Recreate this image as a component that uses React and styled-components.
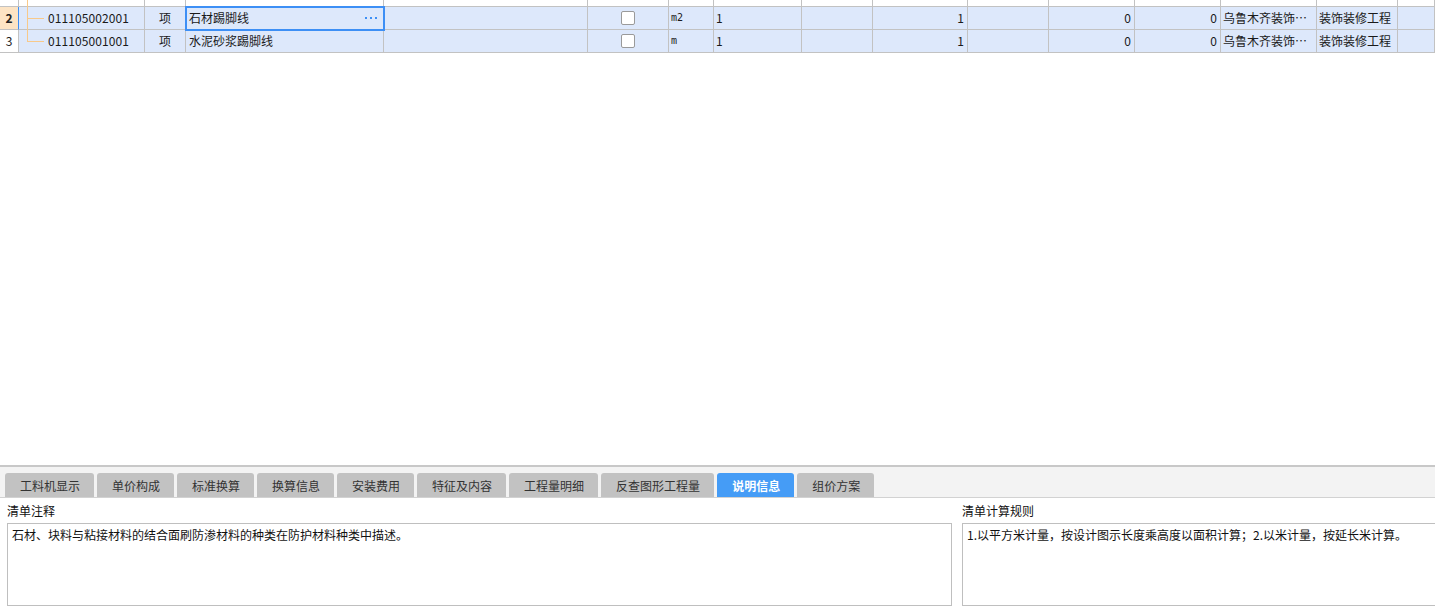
import React from "react";
import styled, { createGlobalStyle, css } from "styled-components";

const GlobalStyle = createGlobalStyle`
  html, body {
    margin: 0;
    padding: 0;
    background: #ffffff;
    overflow: hidden;
  }
  body {
    font-family: "Noto Sans CJK SC", "Noto Sans", sans-serif;
    font-size: 12px;
    color: #1a1a1a;
  }
`;

const COLS = "19px 126px 41px 198px 204px 81px 45px 88px 71px 95px 81px 86px 86px 96px 81px 1fr";

const Page = styled.div`
  width: 1435px;
  height: 606px;
  display: flex;
  flex-direction: column;
  overflow: hidden;
`;

const GridArea = styled.div`
  height: 465px;
  flex: none;
  background: #ffffff;
`;

const Row = styled.div`
  display: grid;
  grid-template-columns: ${COLS};
  height: ${(p) => p.$height || 23}px;
  background: ${(p) => (p.$filled ? "#dde8fb" : "#ffffff")};
`;

const Cell = styled.div`
  position: relative;
  box-sizing: border-box;
  border-right: 1px solid #c2c2c2;
  border-bottom: 1px solid #c2c2c2;
  display: flex;
  align-items: center;
  justify-content: ${(p) =>
    p.$align === "right" ? "flex-end" : p.$align === "center" ? "center" : "flex-start"};
  padding: 0 ${(p) => (p.$align === "right" ? 3 : 0)}px 0 ${(p) => p.$pl ?? 2}px;
  white-space: nowrap;
  overflow: hidden;
  line-height: 22px;
  font-size: 12px;
`;

const HeaderCell = styled(Cell)`
  justify-content: center;
  padding: 0;
  background: ${(p) => (p.$active ? "#fde4c4" : "#ffffff")};
  font-weight: ${(p) => (p.$active ? 700 : 400)};
  border-right-color: ${(p) => (p.$active ? "#3d8ff5" : "#c2c2c2")};
  color: #222;
`;

const CodeCell = styled(Cell)`
  padding-left: 8px;
  align-items: stretch;
  overflow: visible;
`;

const CodeText = styled.span`
  align-self: center;
  margin-left: 4px;
  letter-spacing: 0.1px;
`;

const TreeGuide = styled.span`
  position: relative;
  width: 17px;
  flex: none;

  &::before {
    content: "";
    position: absolute;
    left: 0;
    top: 0;
    width: 1px;
    bottom: ${(p) => (p.$variant === "last" ? "50%" : "-1px")};
    background: #f8c98a;
  }

  ${(p) =>
    p.$variant !== "through" &&
    css`
      &::after {
        content: "";
        position: absolute;
        left: 0;
        right: 0;
        top: 50%;
        height: 1px;
        background: #f8c98a;
      }
    `}
`;

const NameCell = styled(Cell)`
  padding-left: 3px;
  justify-content: space-between;
  overflow: visible;
  ${(p) =>
    p.$selected &&
    css`
      z-index: 2;
      outline: 2px solid #3d8ff5;
      outline-offset: -1px;
    `}
`;

const More = styled.svg`
  margin-right: 6px;
  flex: none;
`;

const Check = styled.span`
  display: block;
  width: 12px;
  height: 12px;
  border: 1px solid #9a9a9a;
  border-radius: 2px;
  background: #ffffff;
`;

const Unit = styled.span`
  font-family: "DejaVu Sans Mono", "Liberation Mono", monospace;
  font-size: 10px;
`;

const TabBar = styled.div`
  flex: none;
  display: flex;
  align-items: flex-end;
  gap: 3px;
  height: 33px;
  box-sizing: border-box;
  padding-left: 5px;
  background: #f3f3f3;
  border-top: 2px solid #c8c8c8;
  border-bottom: 1px solid #d2d2d2;
`;

const Tab = styled.div`
  height: 24px;
  padding: 0 14px 0 15px;
  display: flex;
  align-items: center;
  border-radius: 3px 3px 0 0;
  font-family: "Noto Sans CJK SC", sans-serif;
  font-size: 12px;
  background: ${(p) => (p.$active ? "#459cf6" : "#c2c2c2")};
  color: ${(p) => (p.$active ? "#ffffff" : "#333333")};
  font-weight: ${(p) => (p.$active ? 700 : 400)};
`;

const Panels = styled.div`
  flex: 1;
  display: grid;
  grid-template-columns: 945px 1fr;
  column-gap: 10px;
  padding-left: 7px;
  background: #ffffff;
`;

const Panel = styled.div`
  display: flex;
  flex-direction: column;
  min-width: 0;
`;

const PanelLabel = styled.div`
  height: 25px;
  line-height: 25px;
  font-size: 12px;
  color: #111;
`;

const TextBox = styled.div`
  flex: 1;
  box-sizing: border-box;
  border: 1px solid #bfbfbf;
  border-right: ${(p) => (p.$open ? "none" : "1px solid #bfbfbf")};
  padding: 4px 4px;
  font-size: 12px;
  line-height: 14px;
  color: #111;
  white-space: nowrap;
`;

const tabs = [
  "工料机显示",
  "单价构成",
  "标准换算",
  "换算信息",
  "安装费用",
  "特征及内容",
  "工程量明细",
  "反查图形工程量",
  "说明信息",
  "组价方案",
];

const rows = [
  { no: "2", code: "011105002001", name: "石材踢脚线", unit: "m2", active: true, guide: "mid" },
  { no: "3", code: "011105001001", name: "水泥砂浆踢脚线", unit: "m", active: false, guide: "last" },
];

const EmptyCells = ({ count }) =>
  Array.from({ length: count }).map((_, i) => <Cell key={i} />);

const Ellipsis = () => (
  <More width="12" height="2" viewBox="0 0 12 2">
    <rect x="0" y="0" width="2" height="2" fill="#3d8ff5" />
    <rect x="5" y="0" width="2" height="2" fill="#3d8ff5" />
    <rect x="10" y="0" width="2" height="2" fill="#3d8ff5" />
  </More>
);

export default function App() {
  return (
    <>
      <GlobalStyle />
      <Page>
        <GridArea>
          <Row $height={7}>
            <HeaderCell />
            <CodeCell>
              <TreeGuide $variant="through" />
            </CodeCell>
            <EmptyCells count={14} />
          </Row>
          {rows.map((r) => (
            <Row key={r.no} $filled>
              <HeaderCell $active={r.active}>{r.no}</HeaderCell>
              <CodeCell>
                <TreeGuide $variant={r.guide} />
                <CodeText>{r.code}</CodeText>
              </CodeCell>
              <Cell $align="center" $pl={0}>项</Cell>
              <NameCell $selected={r.active}>
                <span>{r.name}</span>
                {r.active && <Ellipsis />}
              </NameCell>
              <Cell />
              <Cell $align="center" $pl={0}>
                <Check />
              </Cell>
              <Cell>
                <Unit>{r.unit}</Unit>
              </Cell>
              <Cell>1</Cell>
              <Cell />
              <Cell $align="right">1</Cell>
              <Cell />
              <Cell $align="right">0</Cell>
              <Cell $align="right">0</Cell>
              <Cell>乌鲁木齐装饰…</Cell>
              <Cell>装饰装修工程</Cell>
              <Cell />
            </Row>
          ))}
        </GridArea>

        <TabBar>
          {tabs.map((t) => (
            <Tab key={t} $active={t === "说明信息"}>
              {t}
            </Tab>
          ))}
        </TabBar>

        <Panels>
          <Panel>
            <PanelLabel>清单注释</PanelLabel>
            <TextBox>石材、块料与粘接材料的结合面刷防渗材料的种类在防护材料种类中描述。</TextBox>
          </Panel>
          <Panel>
            <PanelLabel>清单计算规则</PanelLabel>
            <TextBox $open>1.以平方米计量，按设计图示长度乘高度以面积计算；2.以米计量，按延长米计算。</TextBox>
          </Panel>
        </Panels>
      </Page>
    </>
  );
}
